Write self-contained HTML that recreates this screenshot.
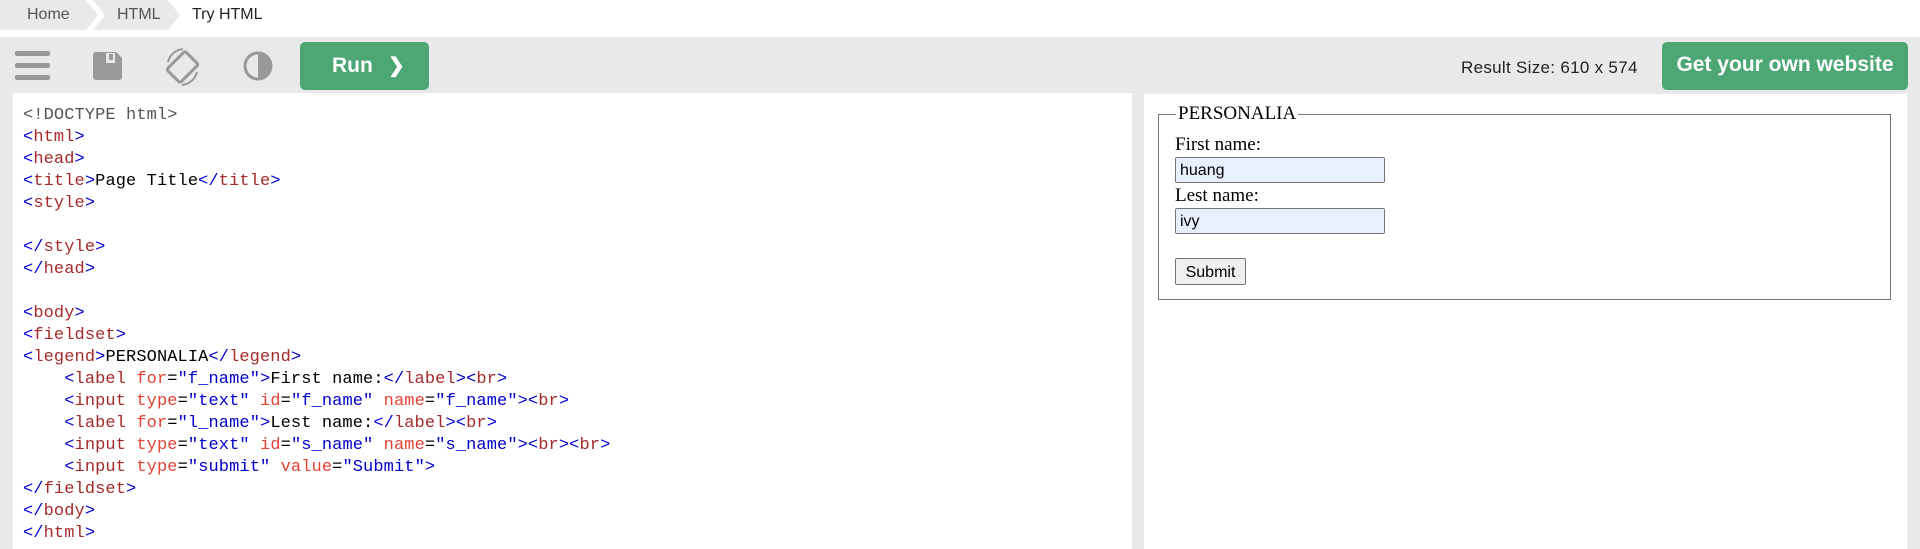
<!DOCTYPE html>
<html><head><style>
body{margin:0;width:1920px;height:549px;overflow:hidden;background:#fff;font-family:"Liberation Sans",sans-serif;position:relative}
.bc{position:absolute;top:0;left:0;height:30px}
.crumb{position:absolute;top:0;height:30px;font-size:16px;line-height:30px;color:#555}
.tb{position:absolute;top:37px;left:0;width:1920px;height:512px;background:#e7e9eb}
.btn{position:absolute;background:#4ca774;color:#fff;border-radius:5px;font-weight:bold}
.code{position:absolute;left:13px;top:93px;width:1119px;height:456px;background:#fff}
.code pre{margin:0;position:absolute;left:10px;top:12px;font-family:"Liberation Mono",monospace;font-size:17px;line-height:22px;color:#000;letter-spacing:0.1px}
.b{color:#0000cd}.t{color:#a52a2a}.a{color:#e34234}.v{color:#0000cd}.d{color:#555}
.res{position:absolute;left:1144px;top:94px;width:763px;height:455px;background:#fff;font-family:"Liberation Serif",serif;font-size:19px}
.inp{position:absolute;left:17px;width:210px;height:26px;border:1px solid #767676;border-radius:2px;background:#e8f0fe;font-family:"Liberation Sans",sans-serif;font-size:16px;line-height:26px;padding-left:4px;box-sizing:border-box}
</style></head><body>
<svg class="bc" width="240" height="30"><polygon points="0,0 86,0 98,15 86,30 0,30" fill="#e7e9eb"/><polygon points="93,0 168,0 180,15 168,30 93,30 105,15" fill="#e7e9eb"/></svg>
<div class="crumb" style="left:27px">Home</div>
<div class="crumb" style="left:117px">HTML</div>
<div class="crumb" style="left:192px;color:#222">Try HTML</div>
<div class="tb"></div>
<svg style="position:absolute;left:0;top:44px" width="290" height="44">
<rect x="15" y="7" width="35" height="5" rx="2" fill="#999"/><rect x="15" y="19" width="35" height="5" rx="2" fill="#999"/><rect x="15" y="31" width="35" height="5" rx="2" fill="#999"/>
<path d="M96 8h20l6 6v19a3 3 0 0 1-3 3h-23a3 3 0 0 1-3-3v-22a3 3 0 0 1 3-3z" fill="#999"/><rect x="106" y="9" width="9" height="10" fill="#e7e9eb"/><rect x="109" y="10" width="4" height="6" fill="#999"/>
<rect x="173" y="10" width="19" height="26" rx="2" transform="rotate(45 182.5 23)" fill="none" stroke="#999" stroke-width="3"/>
<path d="M168 18a17 17 0 0 1 15-13M197 28a17 17 0 0 1-15 13" fill="none" stroke="#999" stroke-width="2"/>
<circle cx="258" cy="22" r="13" fill="none" stroke="#999" stroke-width="3"/><path d="M258 9a13 13 0 0 1 0 26z" fill="#999"/>
</svg>
<div class="btn" style="left:300px;top:42px;width:129px;height:48px;font-size:21px;line-height:48px"><span style="position:absolute;left:32px">Run</span><span style="position:absolute;left:88px;font-size:20px">&#10095;</span></div>
<div style="position:absolute;left:1461px;top:58px;font-size:17px;letter-spacing:0.3px;color:#222">Result Size: 610 x 574</div>
<div class="btn" style="left:1662px;top:42px;width:246px;height:48px;font-size:21px;line-height:46px;text-align:center">Get your own website</div>
<div class="code"><pre><span class="d">&lt;!DOCTYPE html&gt;</span>
<span class="b">&lt;</span><span class="t">html</span><span class="b">&gt;</span>
<span class="b">&lt;</span><span class="t">head</span><span class="b">&gt;</span>
<span class="b">&lt;</span><span class="t">title</span><span class="b">&gt;</span>Page Title<span class="b">&lt;/</span><span class="t">title</span><span class="b">&gt;</span>
<span class="b">&lt;</span><span class="t">style</span><span class="b">&gt;</span>

<span class="b">&lt;/</span><span class="t">style</span><span class="b">&gt;</span>
<span class="b">&lt;/</span><span class="t">head</span><span class="b">&gt;</span>

<span class="b">&lt;</span><span class="t">body</span><span class="b">&gt;</span>
<span class="b">&lt;</span><span class="t">fieldset</span><span class="b">&gt;</span>
<span class="b">&lt;</span><span class="t">legend</span><span class="b">&gt;</span>PERSONALIA<span class="b">&lt;/</span><span class="t">legend</span><span class="b">&gt;</span>
    <span class="b">&lt;</span><span class="t">label</span> <span class="a">for</span>=<span class="v">"f_name"</span><span class="b">&gt;</span>First name:<span class="b">&lt;/</span><span class="t">label</span><span class="b">&gt;&lt;</span><span class="t">br</span><span class="b">&gt;</span>
    <span class="b">&lt;</span><span class="t">input</span> <span class="a">type</span>=<span class="v">"text"</span> <span class="a">id</span>=<span class="v">"f_name"</span> <span class="a">name</span>=<span class="v">"f_name"</span><span class="b">&gt;&lt;</span><span class="t">br</span><span class="b">&gt;</span>
    <span class="b">&lt;</span><span class="t">label</span> <span class="a">for</span>=<span class="v">"l_name"</span><span class="b">&gt;</span>Lest name:<span class="b">&lt;/</span><span class="t">label</span><span class="b">&gt;&lt;</span><span class="t">br</span><span class="b">&gt;</span>
    <span class="b">&lt;</span><span class="t">input</span> <span class="a">type</span>=<span class="v">"text"</span> <span class="a">id</span>=<span class="v">"s_name"</span> <span class="a">name</span>=<span class="v">"s_name"</span><span class="b">&gt;&lt;</span><span class="t">br</span><span class="b">&gt;&lt;</span><span class="t">br</span><span class="b">&gt;</span>
    <span class="b">&lt;</span><span class="t">input</span> <span class="a">type</span>=<span class="v">"submit"</span> <span class="a">value</span>=<span class="v">"Submit"</span><span class="b">&gt;</span>
<span class="b">&lt;/</span><span class="t">fieldset</span><span class="b">&gt;</span>
<span class="b">&lt;/</span><span class="t">body</span><span class="b">&gt;</span>
<span class="b">&lt;/</span><span class="t">html</span><span class="b">&gt;</span></pre></div>
<div class="res">
<div style="position:absolute;left:14px;top:20px;width:733px;height:186px;border:1px solid #777;box-sizing:border-box"></div>
<div style="position:absolute;left:32px;top:8px;background:#fff;padding:0 2px;line-height:24px">PERSONALIA</div>
<div style="position:absolute;left:31px;top:39px;line-height:24px">First name:</div>
<div class="inp" style="top:63px;left:31px">huang</div>
<div style="position:absolute;left:31px;top:90px;line-height:24px">Lest name:</div>
<div class="inp" style="top:114px;left:31px">ivy</div>
<div style="position:absolute;left:31px;top:164px;width:71px;height:27px;border:1px solid #767676;border-radius:2px;background:#efefef;font-family:'Liberation Sans',sans-serif;font-size:16px;line-height:27px;text-align:center;box-sizing:border-box">Submit</div>
</div>
</body></html>
